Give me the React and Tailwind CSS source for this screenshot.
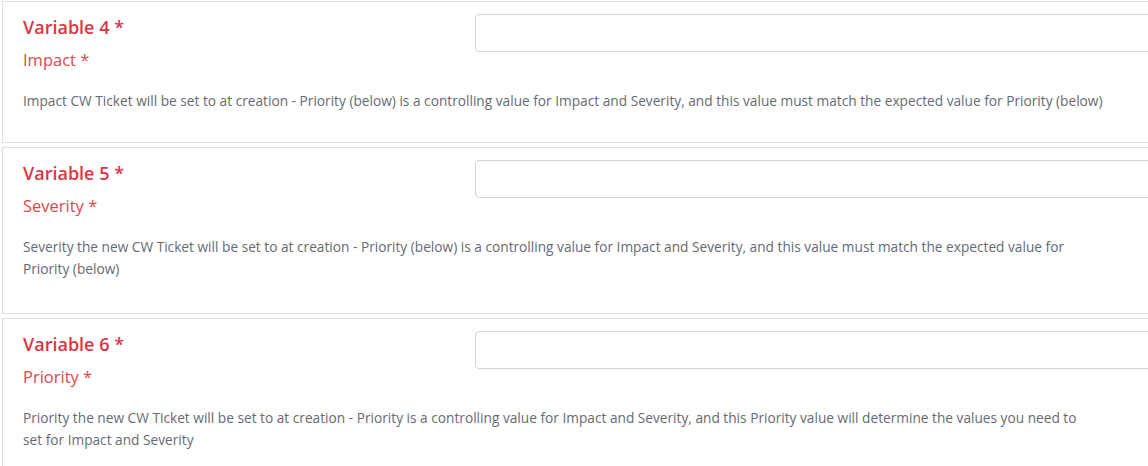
import React from "react";

const fields = [
  {
    title: "Variable 4",
    label: "Impact",
    help: [
      "Impact CW Ticket will be set to at creation - Priority (below) is a controlling value for Impact and Severity, and this value must match the expected value for Priority (below)",
    ],
  },
  {
    title: "Variable 5",
    label: "Severity",
    help: [
      "Severity the new CW Ticket will be set to at creation - Priority (below) is a controlling value for Impact and Severity, and this value must match the expected value for",
      "Priority (below)",
    ],
  },
  {
    title: "Variable 6",
    label: "Priority",
    help: [
      "Priority the new CW Ticket will be set to at creation - Priority is a controlling value for Impact and Severity, and this Priority value will determine the values you need to",
      "set for Impact and Severity",
    ],
  },
];

const FieldCard = ({ title, label, help }) => {
  return (
    <div
      className={
        help.length > 1
          ? "border border-[#dedede] bg-white pl-[20px] pt-[12px] pb-[33px] w-[1200px]"
          : "border border-[#dedede] bg-white pl-[20px] pt-[12px] pb-[30px] w-[1200px]"
      }
    >
      <div className="flex">
        <div className="w-[452px] shrink-0">
          <div className="text-[18px] leading-[26px] font-semibold text-[#dc3545]">{title} *</div>
          <div className="mt-[7px] text-[16.5px] leading-[26px] text-[#e04848]">{label} *</div>
        </div>
        <input
          type="text"
          className="h-[38px] flex-1 rounded-[4px] border border-[#ced4da] bg-white"
        />
      </div>
      <p className="mt-[17px] w-[1110px] text-[13.7px] leading-[22px] text-[#666a72]">
        {help.map((line, i) => (
          <React.Fragment key={i}>
            {i > 0 && <br />}
            {line}
          </React.Fragment>
        ))}
      </p>
    </div>
  );
};

export default function App() {
  return (
    <div
      className="w-[1148px] h-[466px] overflow-hidden bg-white pt-[1px] pl-[2px] flex flex-col gap-[4px]"
      style={{ fontFamily: '"Open Sans", "Noto Sans", sans-serif' }}
    >
      {fields.map((f) => (
        <FieldCard key={f.title} {...f} />
      ))}
    </div>
  );
}
